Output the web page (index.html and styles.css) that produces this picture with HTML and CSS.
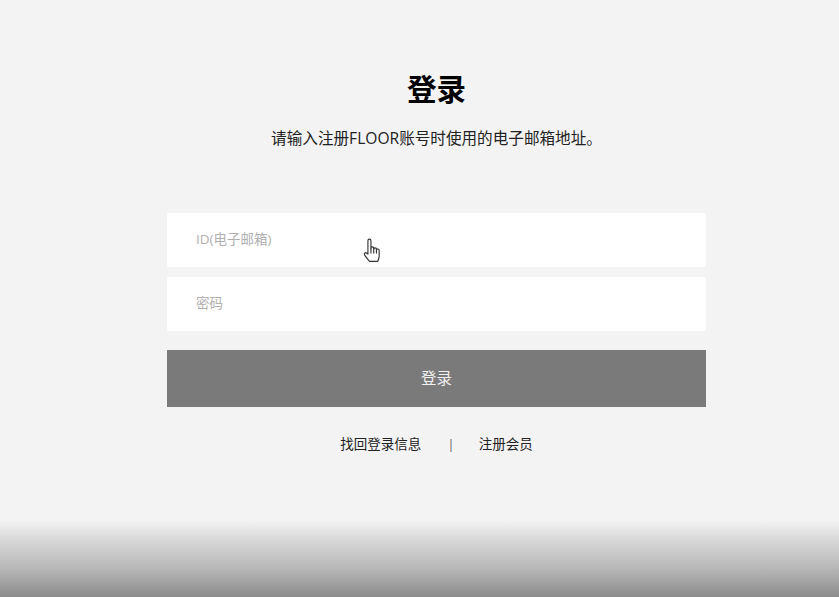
FILE: index.html
```html
<!DOCTYPE html>
<html lang="zh">
<head>
<meta charset="utf-8">
<title>登录</title>
<link rel="stylesheet" href="styles.css">
</head>
<body>
<main class="page">
  <h1 class="title">登录</h1>
  <p class="lead">请输入注册FLOOR账号时使用的电子邮箱地址。</p>
  <form class="form">
    <div class="field field-id">
      <span class="placeholder">ID(电子邮箱)</span>
      <svg class="cursor" width="19" height="26" viewBox="0 0 18 25" fill="#fff" stroke="#333" stroke-width="1.1" stroke-linejoin="round" stroke-linecap="round">
        <path d="M4.6 15.5V2.6c0-2 2.9-2 2.9 0v7.2c0-1.6 2.7-1.6 2.7 0v.8c0-1.5 2.6-1.5 2.6 0v.9c0-1.4 2.6-1.3 2.6.3v5.6c0 2.3-.6 3.500-1.400 5.100H6.300C5 21 3.400 19.600 1.500 16.500c-1-1.700 .9-3.100 2-1.800z"/>
        <path d="M7.500 10v4.500M10.200 10.500v4M12.800 11.500v3"/>
      </svg>
    </div>
    <div class="field field-pw"><span class="placeholder">密码</span></div>
    <button type="button" class="submit">登录</button>
  </form>
  <nav class="links">
    <a class="link">找回登录信息</a>
    <span class="sep">|</span>
    <a class="link">注册会员</a>
  </nav>
</main>
<div class="shade"></div>
</body>
</html>
```
FILE: styles.css
```css
* { box-sizing: border-box; }
html, body { margin: 0; height: 100%; }
body {
  background: #f3f3f3;
  font-family: "Open Sans", "Noto Sans CJK SC", sans-serif;
  overflow: hidden;
  height: 597px;
  display: flex;
  flex-direction: column;
}
.page {
  flex: 1;
  display: flex;
  flex-direction: column;
  align-items: center;
  padding-top: 69px;
  padding-left: 34px;
}
.title {
  margin: 0;
  font-size: 29.5px;
  line-height: 40px;
  font-weight: 700;
  color: #000;
}
.lead {
  margin: 18px 0 0;
  font-size: 15.6px;
  line-height: 22px;
  color: #222;
}
.form {
  margin-top: 64px;
  width: 539px;
  display: flex;
  flex-direction: column;
}
.field {
  height: 54px;
  background: #fff;
  display: flex;
  align-items: center;
  padding: 0 0 2px 29px;
  font-size: 13.5px;
  color: #b0b0b0;
}
.field-pw { margin-top: 10px; }
.field-id { position: relative; }
.placeholder { line-height: 20px; }
.cursor {
  position: absolute;
  left: 196px;
  top: 25px;
}
.submit {
  margin-top: 19px;
  height: 57px;
  border: 0;
  background: #7a7a7a;
  color: #f0f0f0;
  font: inherit;
  font-size: 15.5px;
  line-height: 20px;
  padding: 0 0 2px;
}
.links {
  margin-top: 27px;
  display: flex;
  align-items: center;
  font-size: 13.5px;
  line-height: 20px;
  color: #222;
}
.sep { margin: 0 24px 0 26px; color: #666; }
.shade {
  flex: none;
  height: 77px;
  background: linear-gradient(#f3f3f3, #dcdcdc 22%, #b8b8b8 62%, #8c8c8c);
}
```
